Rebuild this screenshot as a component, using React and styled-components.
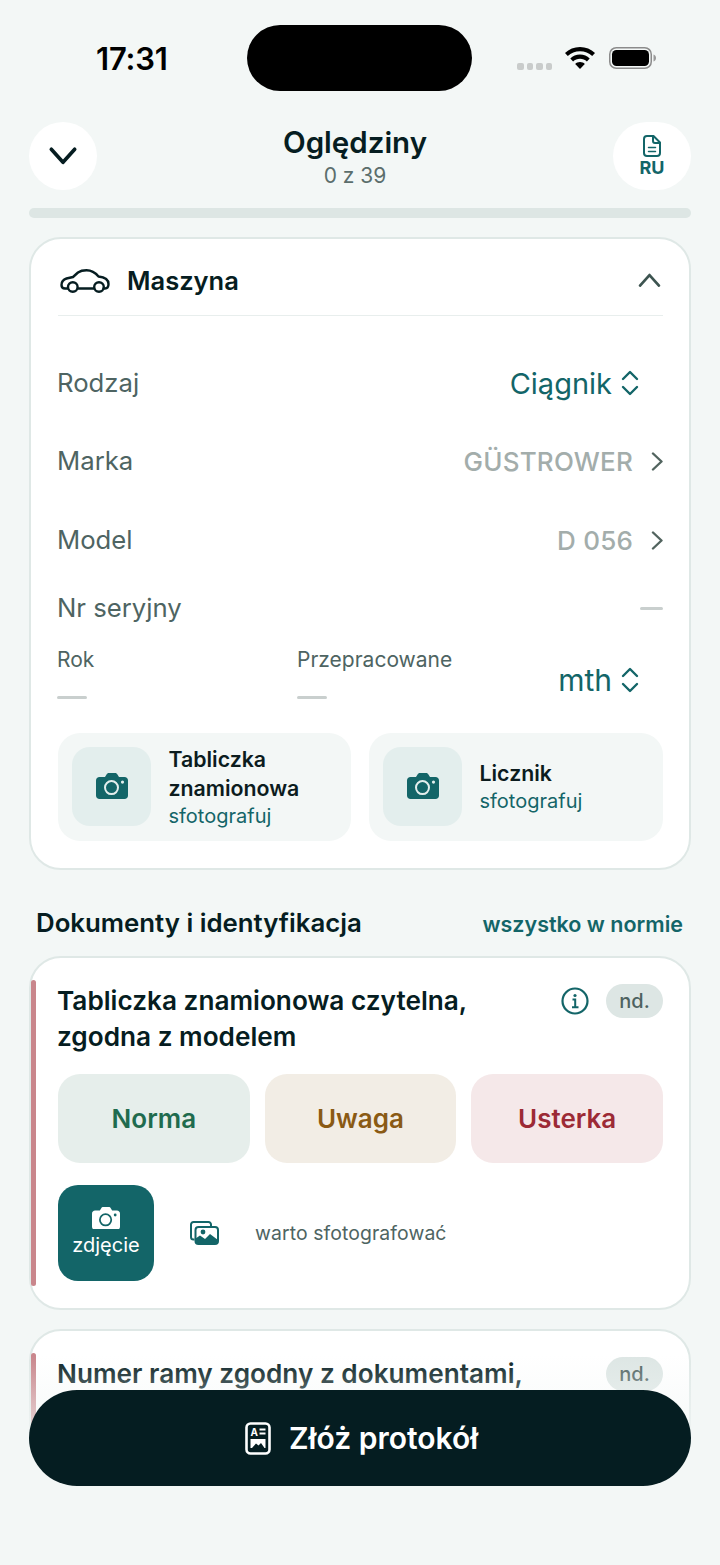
import React from 'react';
import styled, { createGlobalStyle } from 'styled-components';

const GlobalStyle = createGlobalStyle`
  html, body {
    margin: 0;
    padding: 0;
    background: #f3f7f6;
    font-family: Inter, "Noto Sans", sans-serif;
  }
  * { box-sizing: border-box; }
`;

const Page = styled.div`
  position: relative;
  width: 720px;
  height: 1565px;
  overflow: hidden;
  background: #f3f7f6;
  padding: 25px 29px 0;
`;

const StatusBar = styled.div`
  display: flex;
  align-items: center;
  height: 66px;
  padding-left: 67px;
`;

const Time = styled.div`
  width: 151px;
  font-size: 31px;
  font-weight: 600;
  color: #000;
  letter-spacing: -0.2px;
  margin-top: 1px;
`;

const Island = styled.div`
  width: 225px;
  height: 66px;
  border-radius: 33px;
  background: #000;
`;

const StatusIcons = styled.div`
  display: flex;
  align-items: center;
  gap: 14px;
  margin-left: 45px;
`;

const Dots = styled.div`
  display: flex;
  gap: 3px;
  margin-top: 16px;
  margin-right: -1px;
`;

const Dot = styled.span`
  width: 6.5px;
  height: 7px;
  border-radius: 2px;
  background: #c9cccb;
`;

const Header = styled.div`
  display: flex;
  align-items: flex-start;
  justify-content: space-between;
  margin-top: 31px;
`;

const BackButton = styled.div`
  width: 68px;
  height: 68px;
  border-radius: 50%;
  background: #fff;
  display: flex;
  align-items: center;
  justify-content: center;
`;

const HeaderTitle = styled.div`
  display: flex;
  flex-direction: column;
  align-items: center;
`;

const Title = styled.div`
  font-size: 29.5px;
  line-height: 41px;
  font-weight: 600;
  color: #061d21;
`;

const Subtitle = styled.div`
  font-size: 21px;
  line-height: 25px;
  color: #5b6e6c;
`;

const LangButton = styled.div`
  width: 78px;
  height: 68px;
  border-radius: 34px;
  background: #fff;
  display: flex;
  flex-direction: column;
  align-items: center;
  justify-content: center;
  gap: 1px;
  font-size: 18px;
  line-height: 19px;
  font-weight: 700;
  color: #136568;
`;

const Progress = styled.div`
  height: 10px;
  border-radius: 5px;
  background: #dde6e4;
  margin-top: 18px;
`;

const Card = styled.div`
  position: relative;
  background: #fff;
  border: 2px solid #dfe8e6;
  border-radius: 32px;
  padding: ${(p) => p.$padding};
  margin-top: ${(p) => p.$top}px;
`;

const CardHead = styled.div`
  display: flex;
  align-items: center;
  height: 77px;
  padding: 7px 3px 0 2px;
  border-bottom: 1px solid #e8eeed;
  font-size: 25.5px;
  font-weight: 600;
  color: #061d21;
`;

const CardHeadLabel = styled.span`
  margin-left: 17px;
  flex: 1;
`;

const Rows = styled.div`
  padding-top: 28px;
`;

const Row = styled.div`
  display: flex;
  align-items: center;
  justify-content: space-between;
  height: ${(p) => p.$height}px;
`;

const RowLabel = styled.div`
  font-size: 25.7px;
  color: #4e6462;
  margin: -2px 0 0 -1px;
`;

const RowValue = styled.div`
  display: flex;
  align-items: center;
  gap: 18px;
  font-size: 26px;
  font-weight: 500;
  letter-spacing: 0.2px;
  color: #a3adab;
`;

const SelectValue = styled.div`
  display: flex;
  align-items: center;
  gap: 9px;
  padding-right: 24px;
  font-size: 29px;
  color: #136568;
`;

const Dash = styled.span`
  display: block;
  width: ${(p) => p.$width}px;
  height: 3px;
  border-radius: 2px;
  background: #c9cfce;
`;

const Stats = styled.div`
  display: flex;
  margin-top: 10px;
  height: 86px;
`;

const Stat = styled.div`
  width: ${(p) => p.$width}px;
  display: flex;
  flex-direction: column;
  font-size: 21px;
  line-height: 26px;
  color: #4e6462;
  gap: 23px;
  margin-left: ${(p) => p.$shift || 0}px;
`;

const StatSelect = styled(SelectValue)`
  flex: 1;
  justify-content: flex-end;
  height: 50px;
  margin-top: 8px;
  font-size: 30px;
`;

const PhotoGrid = styled.div`
  display: grid;
  grid-template-columns: 293px 294px;
  gap: 18px;
`;

const PhotoCard = styled.div`
  display: flex;
  align-items: center;
  gap: 17.5px;
  height: 108px;
  padding-left: 14px;
  background: #f3f7f6;
  border-radius: 22px;
`;

const PhotoIcon = styled.div`
  width: 79px;
  height: 79px;
  border-radius: 18px;
  background: #e3eeed;
  display: flex;
  align-items: center;
  justify-content: center;
`;

const PhotoText = styled.div`
  display: flex;
  flex-direction: column;
`;

const PhotoTitle = styled.div`
  font-size: 21.3px;
  line-height: 29px;
  font-weight: 600;
  color: #0c1c1e;
`;

const PhotoHint = styled.div`
  font-size: 20px;
  line-height: 26px;
  color: #136568;
`;

const SectionHead = styled.div`
  display: flex;
  align-items: center;
  justify-content: space-between;
  padding: 0 8px 0 7px;
  margin-top: 38px;
  height: 30px;
`;

const SectionTitle = styled.div`
  font-size: 25.8px;
  font-weight: 600;
  color: #061d21;
`;

const SectionAction = styled.div`
  font-size: 21.5px;
  font-weight: 600;
  color: #136568;
  margin-top: 3px;
`;

const SideBar = styled.span`
  position: absolute;
  left: 0;
  top: 22px;
  bottom: 22px;
  width: 5px;
  border-radius: 3px;
  background: #c9868c;
`;

const ItemHead = styled.div`
  display: flex;
  align-items: flex-start;
  justify-content: space-between;
`;

const ItemTitle = styled.div`
  font-size: 26.2px;
  line-height: 36px;
  font-weight: 600;
  color: #061d21;
  margin: -1px 0 0 -1px;
`;

const ItemTools = styled.div`
  display: flex;
  align-items: center;
  gap: 17px;
`;

const Pill = styled.div`
  width: 57px;
  height: 34px;
  border-radius: 17px;
  background: #dde6e4;
  display: flex;
  align-items: center;
  justify-content: center;
  font-size: 20px;
  font-weight: 500;
  color: #4e6260;
`;

const Choices = styled.div`
  display: grid;
  grid-template-columns: repeat(3, 1fr);
  gap: 15px;
  margin-top: 19px;
`;

const Choice = styled.div`
  height: 89px;
  border-radius: 22px;
  display: flex;
  align-items: center;
  justify-content: center;
  font-size: 26px;
  font-weight: 600;
  background: ${(p) => p.$bg};
  color: ${(p) => p.$color};
`;

const MediaRow = styled.div`
  display: flex;
  align-items: center;
  margin-top: 22px;
`;

const ShotButton = styled.div`
  width: 96px;
  height: 96px;
  border-radius: 20px;
  background: #136568;
  display: flex;
  flex-direction: column;
  align-items: center;
  justify-content: center;
  gap: 3px;
  font-size: 20px;
  line-height: 26px;
  color: #fff;
`;

const GalleryButton = styled.div`
  margin-left: 36px;
  display: flex;
`;

const MediaHint = styled.div`
  margin-left: 36px;
  font-size: 19.4px;
  color: #4e6462;
  letter-spacing: 0.1px;
`;

const Fade = styled.div`
  position: absolute;
  left: 0;
  right: 0;
  top: 1355px;
  bottom: 0;
  background: linear-gradient(to bottom, rgba(243, 247, 246, 0) 0, rgba(243, 247, 246, 1) 110px);
`;

const SubmitButton = styled.div`
  position: absolute;
  left: 29px;
  right: 29px;
  top: 1390px;
  height: 96px;
  border-radius: 48px;
  background: #051d21;
  display: flex;
  align-items: center;
  justify-content: center;
  gap: 18px;
  padding-left: 3px;
  font-size: 30px;
  font-weight: 600;
  color: #fff;
`;

const ChevronV = ({ dir, color, size, width }) => (
  <svg width={size} height={size * 0.6} viewBox="0 0 20 12" fill="none" style={{ overflow: 'visible' }}>
    <path d={dir === 'up' ? 'M1 11l9-10 9 10' : 'M1 1l9 10 9-10'} stroke={color} strokeWidth={width} strokeLinecap="round" strokeLinejoin="round" />
  </svg>
);

const ChevronRight = () => (
  <svg width="12" height="19" viewBox="0 0 12 19" fill="none">
    <path d="M2 1.500l8.500 8-8.500 8" stroke="#52645f" strokeWidth="2.400" strokeLinecap="round" strokeLinejoin="round" />
  </svg>
);

const UpDown = () => (
  <svg width="18" height="26" viewBox="0 0 18 26" fill="none">
    <path d="M2 9l7-7 7 7M2 17l7 7 7-7" stroke="#136568" strokeWidth="2.400" strokeLinecap="round" strokeLinejoin="round" />
  </svg>
);

const Camera = ({ size = 32, fg = '#136568', bg = '#e3eeed' }) => (
  <svg width={size} height={size * 0.82} viewBox="0 0 32 26">
    <path d="M3.500 4H9l1.400-2.400C11 .6 11.800 0 13 0h6c1.200 0 2 .6 2.600 1.600L23 4h5.500C30.500 4 32 5.500 32 7.500v15c0 2-1.500 3.500-3.500 3.500h-25C1.500 26 0 24.500 0 22.500v-15C0 5.500 1.500 4 3.500 4z" fill={fg} />
    <circle cx="15.500" cy="14.500" r="6.500" fill="none" stroke={bg} strokeWidth="2" />
    <circle cx="26.500" cy="9" r="1.600" fill={bg} />
  </svg>
);

const Gallery = () => (
  <svg width="29" height="24" viewBox="0 0 29 24" fill="none">
    <path d="M4.500 18.500H3.500A2.500 2.500 0 0 1 1 16V3.500A2.500 2.500 0 0 1 3.500 1h15A2.500 2.500 0 0 1 21 3.500V5" stroke="#136568" strokeWidth="2" />
    <rect x="5.500" y="6" width="22.500" height="17" rx="3" stroke="#136568" strokeWidth="2" />
    <circle cx="13" cy="11" r="2.400" fill="#136568" />
    <path d="M5.500 21v-3.500l4.500-3 5 3.500 5-5 8 6v2a2 2 0 0 1-2 2h-18a2.500 2.500 0 0 1-2.500-2z" fill="#136568" />
  </svg>
);

const InfoIcon = () => (
  <svg width="28" height="28" viewBox="0 0 28 28" fill="none">
    <circle cx="14" cy="14" r="12.500" stroke="#136568" strokeWidth="2.200" />
    <circle cx="14" cy="8.500" r="1.600" fill="#136568" />
    <path d="M11.500 12.500H14.200V20M11 20.200h6.500" stroke="#136568" strokeWidth="2" />
  </svg>
);

const CarIcon = () => (
  <svg width="50" height="24" viewBox="0 0 50 24" fill="none" stroke="#061d21" strokeWidth="2.400" strokeLinecap="round" strokeLinejoin="round">
    <path d="M7.500 19.500H5C2.500 19.500 1.500 18 1.500 16c0-3.500 2-5.500 5-6.500L13 8l5-4.500C20.500 1.800 23 1.300 26.500 1.300c5 0 8.500 2 12 6.200 5 .5 10 2 10 7.500 0 3-1 4.500-3.500 4.500h-1.500" />
    <path d="M18 19.500h16" />
    <circle cx="12.800" cy="18" r="4.800" />
    <circle cx="39" cy="18" r="4.800" />
  </svg>
);

const DocIcon = () => (
  <svg width="18" height="22" viewBox="0 0 18 22" fill="none" stroke="#136568" strokeWidth="2" strokeLinejoin="round" strokeLinecap="round">
    <path d="M4 1h6.500L17 7.500V18a3 3 0 0 1-3 3H4a3 3 0 0 1-3-3V4a3 3 0 0 1 3-3z" />
    <path d="M10 1.500V6a2 2 0 0 0 2 2h4.500" />
    <path d="M5.500 12.500h7M5.500 16.500h7" strokeWidth="1.500" />
  </svg>
);

const ProtocolIcon = () => (
  <svg width="26" height="33" viewBox="0 0 26 33" fill="none">
    <rect x="1.500" y="1.500" width="23" height="30" rx="4" stroke="#fff" strokeWidth="2.600" />
    <text x="5.500" y="13.500" fontSize="10" fontWeight="700" fill="#fff" fontFamily="Inter, sans-serif">A</text>
    <path d="M14.500 7.500h6M14.500 11.500h6" stroke="#fff" strokeWidth="1.800" />
    <path d="M5.500 17h15v9h-15z" fill="#fff" />
    <path d="M7 26l4-4.500 2.500 2 2.500-2.500 3.500 5z" fill="#051d21" />
  </svg>
);

const WifiIcon = () => (
  <svg width="30" height="22" viewBox="0 0 30 22">
    <path d="M15 0C9.200 0 4 2.300 0 6l2.800 3C6 6 10.300 4.200 15 4.200S24 6 27.200 9L30 6C26 2.300 20.800 0 15 0z" fill="#000" />
    <path d="M15 7.500c-3.800 0-7.200 1.500-9.700 3.900l2.800 3c1.800-1.700 4.200-2.700 6.900-2.700s5.100 1 6.900 2.700l2.800-3C22.200 9 18.800 7.500 15 7.500z" fill="#000" />
    <path d="M15 15c-1.900 0-3.600.7-4.800 1.900L15 22l4.800-5.100C18.600 15.700 16.900 15 15 15z" fill="#000" />
  </svg>
);

const BatteryIcon = () => (
  <svg width="47" height="22" viewBox="0 0 47 22">
    <rect x="0.750" y="0.750" width="41.500" height="20.500" rx="6.500" fill="none" stroke="#8b8b8b" strokeWidth="1.500" />
    <rect x="3" y="3" width="37" height="16" rx="4.500" fill="#000" />
    <path d="M44.500 7.500c1.500.5 2.500 1.800 2.500 3.500s-1 3-2.500 3.500z" fill="#9a9a9a" />
  </svg>
);

const App = () => {
  return (
    <Page>
      <GlobalStyle />
      <StatusBar>
        <Time>17:31</Time>
        <Island />
        <StatusIcons>
          <Dots>
            <Dot />
            <Dot />
            <Dot />
            <Dot />
          </Dots>
          <WifiIcon />
          <BatteryIcon />
        </StatusIcons>
      </StatusBar>

      <Header>
        <BackButton>
          <ChevronV dir="down" color="#061d21" size={26} width={2.800} />
        </BackButton>
        <HeaderTitle>
          <Title>Oględziny</Title>
          <Subtitle>0 z 39</Subtitle>
        </HeaderTitle>
        <LangButton>
          <DocIcon />
          RU
        </LangButton>
      </Header>

      <Progress />

      <Card $padding="0 26px 27px 27px" $top={19}>
        <CardHead>
          <CarIcon />
          <CardHeadLabel>Maszyna</CardHeadLabel>
          <ChevronV dir="up" color="#3d5450" size={21} width={2.600} />
        </CardHead>
        <Rows>
          <Row $height={78.5}>
            <RowLabel>Rodzaj</RowLabel>
            <SelectValue>
              Ciągnik
              <UpDown />
            </SelectValue>
          </Row>
          <Row $height={78.5}>
            <RowLabel>Marka</RowLabel>
            <RowValue>
              GÜSTROWER
              <ChevronRight />
            </RowValue>
          </Row>
          <Row $height={78.5}>
            <RowLabel>Model</RowLabel>
            <RowValue>
              D 056
              <ChevronRight />
            </RowValue>
          </Row>
          <Row $height={57}>
            <RowLabel>Nr seryjny</RowLabel>
            <Dash $width={23} />
          </Row>
        </Rows>
        <Stats>
          <Stat $width={240} $shift={-1}>
            Rok
            <Dash $width={30} />
          </Stat>
          <Stat $width={200}>
            Przepracowane
            <Dash $width={30} />
          </Stat>
          <StatSelect>
            mth
            <UpDown />
          </StatSelect>
        </Stats>
        <PhotoGrid>
          <PhotoCard>
            <PhotoIcon>
              <Camera />
            </PhotoIcon>
            <PhotoText>
              <PhotoTitle>
                Tabliczka
                <br />
                znamionowa
              </PhotoTitle>
              <PhotoHint>sfotografuj</PhotoHint>
            </PhotoText>
          </PhotoCard>
          <PhotoCard>
            <PhotoIcon>
              <Camera />
            </PhotoIcon>
            <PhotoText>
              <PhotoTitle>Licznik</PhotoTitle>
              <PhotoHint>sfotografuj</PhotoHint>
            </PhotoText>
          </PhotoCard>
        </PhotoGrid>
      </Card>

      <SectionHead>
        <SectionTitle>Dokumenty i identyfikacja</SectionTitle>
        <SectionAction>wszystko w normie</SectionAction>
      </SectionHead>

      <Card $padding="26px 26px 27px 27px" $top={18}>
        <SideBar />
        <ItemHead>
          <ItemTitle>
            Tabliczka znamionowa czytelna,
            <br />
            zgodna z modelem
          </ItemTitle>
          <ItemTools>
            <InfoIcon />
            <Pill>nd.</Pill>
          </ItemTools>
        </ItemHead>
        <Choices>
          <Choice $bg="#e6eeeb" $color="#1f6b4e">Norma</Choice>
          <Choice $bg="#f2ede5" $color="#8a5a14">Uwaga</Choice>
          <Choice $bg="#f5e8e9" $color="#9c2a36">Usterka</Choice>
        </Choices>
        <MediaRow>
          <ShotButton>
            <Camera size={28} fg="#fff" bg="#136568" />
            zdjęcie
          </ShotButton>
          <GalleryButton>
            <Gallery />
          </GalleryButton>
          <MediaHint>warto sfotografować</MediaHint>
        </MediaRow>
      </Card>

      <Card $padding="26px 26px 26px 27px" $top={19}>
        <SideBar />
        <ItemHead>
          <ItemTitle>
            Numer ramy zgodny z dokumentami,
            <br />
            zgodny z tabliczką
          </ItemTitle>
          <Pill>nd.</Pill>
        </ItemHead>
      </Card>

      <Fade />
      <SubmitButton>
        <ProtocolIcon />
        Złóż protokół
      </SubmitButton>
    </Page>
  );
};

export default App;
